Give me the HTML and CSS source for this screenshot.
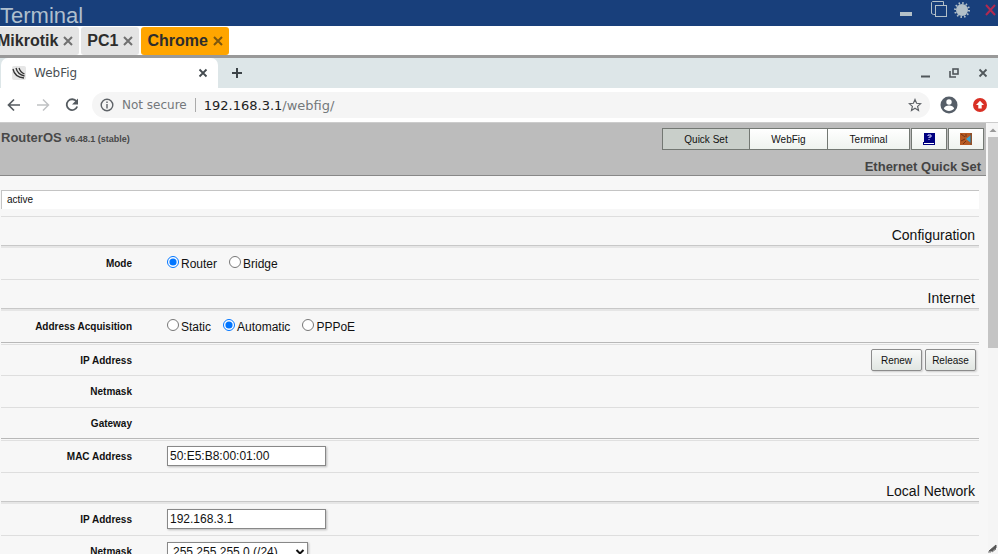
FILE: index.html
```html
<!DOCTYPE html>
<html lang="en">
<head>
<meta charset="utf-8">
<title>WebFig</title>
<link rel="stylesheet" href="styles.css">
</head>
<body>
<header class="console-bar">
  <h1 class="console-title">Terminal</h1>
  <div class="console-controls">
    <svg width="14" height="20" viewBox="0 0 14 20"><rect x="1" y="12" width="12" height="4" fill="#b3c0c8"/></svg>
    <svg class="copy" width="18" height="20" viewBox="0 0 18 20" fill="none" stroke="#b3c0c8"><path d="M4.500 14.500H2.500L.5 13.500V2.500L1.500 1.500H12.500V5"/><rect x="4.500" y="5.500" width="11" height="11"/></svg>
    <svg class="sun" width="18" height="20" viewBox="0 0 18 20"><circle cx="9" cy="10" r="6" fill="#b3c0c8"/><circle cx="9" cy="10" r="7" fill="none" stroke="#b3c0c8" stroke-width="2" stroke-dasharray="1.500 2.165"/></svg>
    <svg class="quit" width="12" height="20" viewBox="0 0 12 20" stroke="#b02a50" stroke-width="2"><path d="M2 5l9 10M11 5L2 15"/></svg>
  </div>
</header>
<nav class="sessions">
  <a class="session first" href="#">Mikrotik <svg viewBox="0 0 10 10"><path d="M1 1l8 8M9 1L1 9"/></svg></a>
  <a class="session" href="#">PC1 <svg viewBox="0 0 10 10"><path d="M1 1l8 8M9 1L1 9"/></svg></a>
  <a class="session current" href="#">Chrome <svg viewBox="0 0 10 10"><path d="M1 1l8 8M9 1L1 9"/></svg></a>
</nav>
<div class="tab-strip">
  <div class="browser-tab">
    <svg width="16" height="16" viewBox="0 0 16 16"><rect x="1" y="1" width="14" height="14" rx="2" fill="#e6e6e6"/><path d="M2 4c1 5 5 8.500 11 9M5 3c1 4 4 7 8.500 8M8 3c1 3 3 5 5.500 6" fill="none" stroke="#333" stroke-width="1.300"/></svg>
    <span>WebFig</span>
    <svg class="tab-close" width="10" height="10" viewBox="0 0 10 10"><path d="M1.500 1.500l7 7M8.500 1.500l-7 7" stroke="#444b50" stroke-width="1.800"/></svg>
  </div>
  <svg class="new-tab" width="12" height="12" viewBox="0 0 12 12"><path d="M6 1v10M1 6h10" stroke="#3c4347" stroke-width="2"/></svg>
  <div class="window-controls">
    <svg width="10" height="12" viewBox="0 0 10 12"><path d="M1 9.500h9" stroke="#50575b" stroke-width="2"/></svg>
    <svg width="10" height="12" viewBox="0 0 10 12" fill="none" stroke="#50575b" stroke-width="1.600"><rect x="4" y="2" width="5" height="5"/><path d="M1 4v6h6"/></svg>
    <svg width="10" height="12" viewBox="0 0 10 12"><path d="M1.500 2.500l7 7M8.500 2.500l-7 7" stroke="#50575b" stroke-width="1.800"/></svg>
  </div>
</div>
<div class="toolbar">
  <svg width="14" height="14" viewBox="0 0 14 14" fill="none" stroke="#555b60" stroke-width="1.700"><path d="M13 7H2M7 1.500L1.500 7L7 12.500"/></svg>
  <svg width="14" height="14" viewBox="0 0 14 14" fill="none" stroke="#c0c2c4" stroke-width="1.500"><path d="M1 7h11M7 1.500L12.500 7L7 12.500"/></svg>
  <svg width="14" height="14" viewBox="0 0 14 14"><path d="M11.500 3.500A5.400 5.400 0 1 0 12.200 8.500" fill="none" stroke="#555b60" stroke-width="1.800"/><path d="M13 .5v6H7z" fill="#555b60"/></svg>
  <div class="omnibox">
    <svg width="14" height="14" viewBox="0 0 14 14" stroke="#5f6368" fill="none" stroke-width="1.400"><circle cx="7" cy="7" r="5.800"/><path d="M7 6v4.500M7 3.500v1.400"/></svg>
    <span class="insecure">Not secure</span>
    <span class="url"><b>192.168.3.1</b>/webfig/</span>
    <svg class="star" width="14" height="14" viewBox="0 0 14 14"><path d="M7 1.500l1.600 3.800 4.100.4-3.100 2.700.9 4L7 10.300l-3.500 2.100.9-4L1.300 5.700l4.100-.4z" fill="none" stroke="#5f6368" stroke-width="1.200"/></svg>
  </div>
  <svg width="18" height="18" viewBox="0 0 18 18"><circle cx="9" cy="9" r="8.500" fill="#565e68"/><circle cx="9" cy="6" r="2.700" fill="#fff"/><path d="M3.800 12.500c1-4 9.400-4 10.400 0-2.400 3.300-8 3.300-10.400 0z" fill="#fff"/></svg>
  <svg width="14" height="14" viewBox="0 0 14 14"><circle cx="7" cy="7" r="7" fill="#d93025"/><path d="M7 2.800L11 7H8.700v3.500H5.300V7H3z" fill="#fff"/></svg>
</div>
<div class="viewport">
  <main class="page">
    <header class="router-head">
      <div class="router-top">
        <div class="brand">RouterOS <small>v6.48.1 (stable)</small></div>
        <div class="modes">
          <div class="mode-group">
            <button class="pressed">Quick Set</button><button>WebFig</button><button>Terminal</button>
          </div>
          <button class="icon-button" aria-label="Manual"><svg width="14" height="14" viewBox="0 0 14 14"><path d="M2 1h11v9H2zM1 10h12v3H1z" fill="#000080"/><path d="M2 11h10v1H2z" fill="#fff"/><path d="M6 4V3h3v2H7v1M7 7v1" fill="none" stroke="#d8d8ff"/></svg></button>
          <button class="icon-button" aria-label="Logout"><svg width="14" height="14" viewBox="0 0 14 14"><path d="M1 1h12v12H1z" fill="#b75a22"/><path d="M2 2l4 3M2 9l4-2M4 12l3-3M7 2v3" stroke="#743312"/><path d="M12 3v8L7 7z" fill="#39a4d4"/><path d="M12 1v12" stroke="#6c4932"/></svg></button>
        </div>
      </div>
      <h2 class="page-title">Ethernet Quick Set</h2>
    </header>
    <form class="settings">
      <div class="status">active</div>
      <h3 class="section">Configuration</h3>
      <div class="row double" role="radiogroup" aria-labelledby="mode">
        <span class="name" id="mode">Mode</span>
        <label><input type="radio" name="mode" checked>Router</label>
        <label><input type="radio" name="mode">Bridge</label>
      </div>
      <h3 class="section">Internet</h3>
      <div class="row double" role="radiogroup" aria-labelledby="acq">
        <span class="name" id="acq">Address Acquisition</span>
        <label><input type="radio" name="acq">Static</label>
        <label><input type="radio" name="acq" checked>Automatic</label>
        <label><input type="radio" name="acq">PPPoE</label>
      </div>
      <div class="row double strong compact">
        <span class="name">IP Address</span>
        <div class="actions"><button type="button">Renew</button><button type="button">Release</button></div>
      </div>
      <div class="row"><span class="name">Netmask</span></div>
      <div class="row compact"><span class="name">Gateway</span></div>
      <div class="row double strong">
        <label class="name" for="mac">MAC Address</label>
        <input class="field" id="mac" type="text" value="50:E5:B8:00:01:00">
      </div>
      <h3 class="section">Local Network</h3>
      <div class="row double">
        <label class="name" for="ip">IP Address</label>
        <input class="field" id="ip" type="text" value="192.168.3.1">
      </div>
      <div class="row">
        <label class="name" for="mask">Netmask</label>
        <div class="select-wrap">
          <select class="field" id="mask"><option>255.255.255.0 (/24)</option></select>
          <svg width="10" height="8" viewBox="0 0 10 8"><path d="M1.500 2L5 5.500L8.500 2" fill="none" stroke="#111" stroke-width="2"/></svg>
        </div>
      </div>
    </form>
  </main>
  <div class="scrollbar">
    <svg width="10" height="14" viewBox="0 0 10 14"><path d="M1.500 9L5 5.500L8.500 9z" fill="#999"/></svg>
    <div class="thumb"></div>
    <svg class="grip" width="10" height="10" viewBox="0 0 10 10"><path d="M1 7l7-6v3L4 7z" fill="#555" stroke="#555"/><path d="M4 8l4-3M0 8h3" stroke="#777"/></svg>
  </div>
</div>
</body>
</html>
```
FILE: styles.css
```css
* { box-sizing: border-box; }
body {
  margin: 0;
  height: 100vh;
  display: flex;
  flex-direction: column;
  overflow: hidden;
  background: #fff;
  color: #111;
  font-family: "Liberation Sans", Arial, sans-serif;
}
svg { display: block; flex: none; }
h1, h2, h3 { margin: 0; font-weight: normal; }
button { font: inherit; color: inherit; }

.console-bar {
  flex: none;
  height: 26px;
  display: flex;
  justify-content: space-between;
  overflow: hidden;
  background: #183f7b;
}
.console-title { color: #afbfce; font-size: 22px; line-height: 32px; }
.console-controls { display: flex; }
.copy { margin-left: 18px; }
.sun { margin-left: 4px; }
.quit { margin: 0 2px 0 13px; }

.sessions {
  flex: none;
  height: 32px;
  display: flex;
  gap: 2px;
  padding-top: 1px;
  border-bottom: 3px solid #999;
}
.session {
  display: flex;
  align-items: center;
  gap: 5px;
  padding: 0 6px;
  border-radius: 3px;
  background: #e4e4e4;
  color: #2d2d2d;
  font-size: 16px;
  font-weight: bold;
  text-decoration: none;
}
.session svg { width: 10px; height: 10px; stroke: #707070; stroke-width: 2; }
.session.first { margin-left: -9px; }
.session.current { background: #ffa500; }
.session.current svg { stroke: #7c570f; }

.tab-strip {
  flex: none;
  height: 30px;
  display: flex;
  align-items: center;
  background: #dde6e8;
  font: 12px "DejaVu Sans", sans-serif;
  color: #4a5054;
}
.browser-tab {
  width: 217px;
  height: 30px;
  margin-left: 1px;
  padding: 0 10px;
  display: flex;
  align-items: center;
  gap: 7px;
  border-radius: 7px 7px 0 0;
  background: #fff;
}
.tab-close { margin-left: auto; }
.new-tab { margin-left: 13px; }
.window-controls { display: flex; gap: 19px; margin: 0 10px 0 auto; }

.toolbar {
  flex: none;
  height: 34px;
  display: flex;
  align-items: center;
  gap: 15px;
  padding: 0 11px 0 7px;
  font: 13px "DejaVu Sans", sans-serif;
}
.omnibox {
  flex: 1;
  height: 26px;
  margin: 0 -5px 0 -2px;
  padding: 0 8px;
  display: flex;
  align-items: center;
  gap: 8px;
  border-radius: 13px;
  background: #f5f5f5;
  color: #74787b;
}
.insecure { padding-right: 8px; border-right: 1px solid #aaa; font-size: 12px; }
.url b { color: #222; font-weight: normal; }
.star { margin-left: auto; }

.viewport { flex: 1; min-height: 0; display: flex; border-top: 1px solid #ccc; }
.page { flex: 1; overflow: hidden; background: #f7f7f7; }
.router-head {
  height: 53px;
  margin-right: 2px;
  background: #bcbcbc;
  border-bottom: 1px solid #888;
}
.router-top { display: flex; justify-content: space-between; padding: 5px 2px 0 1px; }
.brand { color: #484848; font-size: 13px; font-weight: bold; line-height: 20px; }
.brand small { font-size: 9px; }
.modes { display: flex; gap: 1px; }
.mode-group { display: flex; border: 1px solid #737873; }
.modes button { height: 20px; padding: 0; background: linear-gradient(#fff, #eff3ef); font-size: 10px; }
.mode-group button { width: 82px; border: 0; border-left: 1px solid #737873; }
.mode-group button:nth-child(2) { width: 78px; }
.mode-group .pressed { width: 86px; border-left: 0; background: #c9cfca; }
.modes .icon-button {
  width: 36px;
  height: 22px;
  display: grid;
  place-items: center;
  border: 1px solid #737873;
}
.page-title {
  padding-right: 5px;
  color: #444;
  font-size: 13px;
  font-weight: bold;
  line-height: 24px;
  text-align: right;
  padding-top: 5px;
}

.settings { margin: 14px 9px 0 1px; }
.status {
  height: 19px;
  margin-bottom: 7px;
  padding-left: 5px;
  border-top: 1px solid #c4c4c4;
  border-left: 1px solid #c4c4c4;
  background: #fff;
  font-size: 10px;
  line-height: 18px;
}
.section {
  height: 29px;
  padding-right: 4px;
  border-top: 1px solid #dedede;
  font-size: 14px;
  line-height: 36px;
  text-align: right;
}
.row {
  height: 32px;
  display: flex;
  align-items: center;
  border-top: 1px solid #dedede;
  font-size: 12px;
}
.row.compact { height: 31px; }
.row.double {
  height: 34px;
  padding-top: 2px;
  border-top-color: #c8c8c8;
  background: linear-gradient(#e6e6e6, #e6e6e6) 0 0 / 100% 2px no-repeat;
}
.row.double.strong {
  border-top-color: #b8b8b8;
  background: linear-gradient(#e0e0e0, #e0e0e0) 0 1px / 100% 1px no-repeat;
}
.row.double.compact { height: 33px; }
.name { width: 131px; margin-right: 35px; font-size: 10px; font-weight: bold; text-align: right; }
.row label:not(.name) { display: flex; align-items: center; margin-right: 12px; }
input[type="radio"] { width: 12px; height: 12px; margin: 0 2px 3px 0; accent-color: #0075ff; }
.field {
  width: 159px;
  height: 20px;
  padding: 0 2px;
  border: 1px solid #888;
  border-radius: 0;
  background: #fff;
  color: #111;
  box-shadow: 1px 1px 2px #bbb;
  font: 12px "Liberation Sans", Arial, sans-serif;
}
input.field { margin: 0 0 1px; }
select.field { width: 141px; padding-left: 5px; appearance: none; }
.select-wrap { display: grid; align-items: center; }
.select-wrap > * { grid-area: 1 / 1; }
.select-wrap svg { justify-self: end; margin-right: 3px; pointer-events: none; }
.actions { display: flex; gap: 3px; margin: 0 3px 0 auto; }
.actions button {
  width: 51px;
  height: 22px;
  padding: 0;
  border: 1px solid #8c8c8c;
  border-radius: 2px;
  background: linear-gradient(#f8f9f8, #e1e6e2);
  box-shadow: 1px 1px 2px #ccc;
  font-size: 10px;
}

.scrollbar { width: 10px; display: flex; flex-direction: column; background: #f5f5f5; }
.thumb { height: 49%; background: #c4c4c4; }
.grip { margin-top: auto; }
```
